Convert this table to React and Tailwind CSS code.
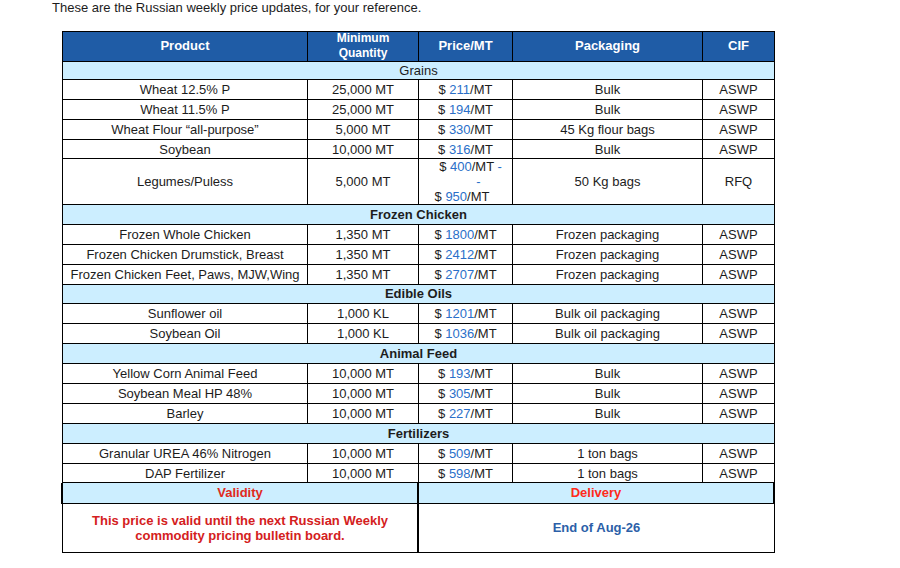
import React from "react";

const W = ["w-[245px]", "w-[111px]", "w-[94px]", "w-[190px]", "w-[72px]"];

function Price({ v }) {
  return (
    <span>
      $ <span className="text-[#2a6fc9]">{v}</span>/MT
    </span>
  );
}

function Row({ h = "h-[20px]", cells }) {
  return (
    <div className={`flex ${h} border-b border-black`}>
      {cells.map((c, i) => (
        <div
          key={i}
          className={`${W[i]} shrink-0 border-r border-black flex items-center justify-center text-center leading-[15px]`}
        >
          {c}
        </div>
      ))}
    </div>
  );
}

function Section({ h = "h-[20px]", title, bold = true }) {
  return (
    <div className={`flex ${h} border-b border-black bg-[#cceeff]`}>
      <div
        className={`w-[712px] border-r border-black flex items-center justify-center ${
          bold ? "font-bold" : ""
        }`}
      >
        {title}
      </div>
    </div>
  );
}

export default function App() {
  return (
    <div
      className="w-[900px] h-[568px] bg-white text-[13px] text-[#1c1c1c] pl-[52px]"
      style={{ fontFamily: '"Liberation Sans", Arial, sans-serif' }}
    >
      <div className="leading-[15px] h-[31px]">
        These are the Russian weekly price updates, for your reference.
      </div>
      <div className="ml-[10px] w-[713px] border-l border-t border-black">
        <div className="flex h-[30px] border-b border-black bg-[#1f5ca6] text-white font-bold">
          <div className={`${W[0]} border-r border-black flex items-center justify-center pb-[2px]`}>Product</div>
          <div className={`${W[1]} border-r border-black flex items-center justify-center text-center text-[12px] leading-[15px] pb-[2px]`}>
            Minimum
            <br />
            Quantity
          </div>
          <div className={`${W[2]} border-r border-black flex items-center justify-center pb-[2px]`}>Price/MT</div>
          <div className={`${W[3]} border-r border-black flex items-center justify-center pb-[2px]`}>Packaging</div>
          <div className={`${W[4]} border-r border-black flex items-center justify-center pb-[2px]`}>CIF</div>
        </div>

        <Section h="h-[18px]" title="Grains" bold={false} />
        <Row cells={["Wheat 12.5% P", "25,000 MT", <Price v="211" />, "Bulk", "ASWP"]} />
        <Row cells={["Wheat 11.5% P", "25,000 MT", <Price v="194" />, "Bulk", "ASWP"]} />
        <Row cells={["Wheat Flour \u201call-purpose\u201d", "5,000 MT", <Price v="330" />, "45 Kg flour bags", "ASWP"]} />
        <Row h="h-[19px]" cells={["Soybean", "10,000 MT", <Price v="316" />, "Bulk", "ASWP"]} />
        <Row
          h="h-[46px]"
          cells={[
            "Legumes/Puless",
            "5,000 MT",
            <div className="flex flex-col items-center">
              <span className="pl-[10px]">
                <Price v="400" />
                <span className="text-[#2a6fc9]"> -</span>
              </span>
              <span className="pl-[26px] text-[#2a6fc9]">-</span>
              <span className="pr-[7px]">
                <Price v="950" />
              </span>
            </div>,
            "50 Kg bags",
            "RFQ",
          ]}
        />

        <Section title="Frozen Chicken" />
        <Row cells={["Frozen Whole Chicken", "1,350 MT", <Price v="1800" />, "Frozen packaging", "ASWP"]} />
        <Row cells={["Frozen Chicken Drumstick, Breast", "1,350 MT", <Price v="2412" />, "Frozen packaging", "ASWP"]} />
        <Row cells={["Frozen Chicken Feet, Paws, MJW,Wing", "1,350 MT", <Price v="2707" />, "Frozen packaging", "ASWP"]} />

        <Section h="h-[19px]" title="Edible Oils" />
        <Row cells={["Sunflower oil", "1,000 KL", <Price v="1201" />, "Bulk oil packaging", "ASWP"]} />
        <Row cells={["Soybean Oil", "1,000 KL", <Price v="1036" />, "Bulk oil packaging", "ASWP"]} />

        <Section title="Animal Feed" />
        <Row cells={["Yellow Corn Animal Feed", "10,000 MT", <Price v="193" />, "Bulk", "ASWP"]} />
        <Row cells={["Soybean Meal HP 48%", "10,000 MT", <Price v="305" />, "Bulk", "ASWP"]} />
        <Row cells={["Barley", "10,000 MT", <Price v="227" />, "Bulk", "ASWP"]} />

        <Section title="Fertilizers" />
        <Row cells={["Granular UREA 46% Nitrogen", "10,000 MT", <Price v="509" />, "1 ton bags", "ASWP"]} />
        <Row h="h-[19px]" cells={["DAP Fertilizer", "10,000 MT", <Price v="598" />, "1 ton bags", "ASWP"]} />

        <div className="flex h-[21px] border-b border-black bg-[#cceeff] font-bold -ml-[2px]">
          <div className="w-[358px] border-l-2 border-r-2 border-black flex items-center justify-center text-[#e02a20]">
            Validity
          </div>
          <div className="w-[356px] border-r-2 border-black flex items-center justify-center text-[#ff2a1a]">
            Delivery
          </div>
        </div>
        <div className="flex h-[49px] border-b border-black font-bold">
          <div className="w-[356px] border-r-2 border-black flex items-center justify-center text-center text-[#d42020] leading-[15px]">
            This price is valid until the next Russian Weekly
            <br />
            commodity pricing bulletin board.
          </div>
          <div className="w-[356px] border-r border-black flex items-center justify-center text-[#2c5fa8]">
            End of Aug-26
          </div>
        </div>
      </div>
    </div>
  );
}
